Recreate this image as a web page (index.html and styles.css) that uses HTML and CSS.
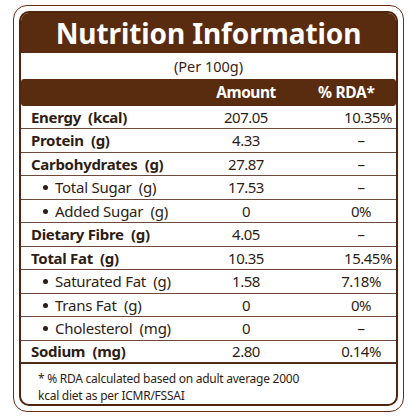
FILE: index.html
```html
<!DOCTYPE html>
<html>
<head>
<meta charset="utf-8">
<link rel="stylesheet" href="styles.css">
</head>
<body>
<div class="outer">
  <div class="panel">
    <div class="title">Nutrition Information</div>
    <div class="per">(Per 100g)</div>
    <div class="head">
      <span></span>
      <span class="c-amt">Amount</span>
      <span class="c-rda">% RDA*</span>
    </div>
    <div class="rows">
      <div class="row main"><span class="name">Energy&nbsp; (kcal)</span><span class="c-amt">207.05</span><span class="c-rda wide">10.35%</span></div>
      <div class="row main"><span class="name">Protein&nbsp; (g)</span><span class="c-amt">4.33</span><span class="c-rda">–</span></div>
      <div class="row main"><span class="name">Carbohydrates&nbsp; (g)</span><span class="c-amt">27.87</span><span class="c-rda">–</span></div>
      <div class="row sub"><span class="name">Total Sugar&nbsp; (g)</span><span class="c-amt">17.53</span><span class="c-rda">–</span></div>
      <div class="row sub"><span class="name">Added Sugar&nbsp; (g)</span><span class="c-amt">0</span><span class="c-rda">0%</span></div>
      <div class="row main"><span class="name">Dietary Fibre&nbsp; (g)</span><span class="c-amt">4.05</span><span class="c-rda">–</span></div>
      <div class="row main"><span class="name">Total Fat&nbsp; (g)</span><span class="c-amt">10.35</span><span class="c-rda wide">15.45%</span></div>
      <div class="row sub"><span class="name">Saturated Fat&nbsp; (g)</span><span class="c-amt">1.58</span><span class="c-rda">7.18%</span></div>
      <div class="row sub"><span class="name">Trans Fat&nbsp; (g)</span><span class="c-amt">0</span><span class="c-rda">0%</span></div>
      <div class="row sub"><span class="name">Cholesterol&nbsp; (mg)</span><span class="c-amt">0</span><span class="c-rda">–</span></div>
      <div class="row main last"><span class="name">Sodium&nbsp; (mg)</span><span class="c-amt">2.80</span><span class="c-rda">0.14%</span></div>
    </div>
    <div class="note">
      <div class="note-line">* % RDA calculated based on adult average 2000</div>
      <div class="note-line">kcal diet as per ICMR/FSSAI</div>
    </div>
  </div>
</div>
</body>
</html>
```
FILE: styles.css
```css
* { box-sizing: border-box; }
html, body { margin: 0; padding: 0; background: #fff; }
body {
  width: 416px;
  height: 416px;
  font-family: "Noto Sans", "DejaVu Sans", sans-serif;
  color: #2e1d14;
}
.outer {
  margin: 5px 12px 0 13px;
  height: 407px;
  border: 1.5px solid #6a2c12;
  border-radius: 14px;
  padding: 5px;
}
.panel {
  height: 100%;
  border: 2px solid #4e260f;
  border-radius: 10px;
  overflow: hidden;
  display: flex;
  flex-direction: column;
}
.title {
  background: #5a2c0f;
  color: #fff;
  font-weight: 700;
  font-size: 28px;
  height: 40px;
  line-height: 40px;
  text-align: center;
  letter-spacing: -0.1px;
}
.per {
  height: 26px;
  line-height: 26px;
  text-align: center;
  font-size: 14.5px;
  color: #3a2418;
}
.head {
  background: #5a2c0f;
  color: #fff;
  font-weight: 700;
  font-size: 15.5px;
  height: 27px;
  display: grid;
  grid-template-columns: 175px 100px 1fr;
  align-items: center;
  border-radius: 3px;
}
.head .c-rda { padding-left: 22px; letter-spacing: -0.3px; }
.rows { display: flex; flex-direction: column; }
.row {
  height: 23.5px;
  display: grid;
  grid-template-columns: 175px 100px 1fr;
  align-items: center;
  font-size: 15px;
  border-bottom: 1.2px solid #6e4a3c;
}
.row.last { border-bottom: 2px solid #4e2c1c; }
.name { padding-left: 10px; white-space: nowrap; letter-spacing: -0.25px; }
.main .name { font-weight: 700; letter-spacing: -0.3px; }
.sub .name { padding-left: 34px; position: relative; }
.sub .name::before {
  content: "";
  position: absolute;
  left: 22px;
  top: 50%;
  width: 5px;
  height: 5px;
  margin-top: -2px;
  border-radius: 50%;
  background: #2e1d14;
}
.c-amt { text-align: center; letter-spacing: -0.5px; }
.row .c-rda { text-align: center; padding-left: 30px; letter-spacing: -0.5px; }
.row .c-rda.wide { padding-left: 44px; }
.note {
  flex: 1;
  padding: 7px 0 0 17px;
  font-size: 12px;
  line-height: 16.5px;
  letter-spacing: -0.25px;
  color: #2e1d14;
}
.note-line { white-space: nowrap; }
```
